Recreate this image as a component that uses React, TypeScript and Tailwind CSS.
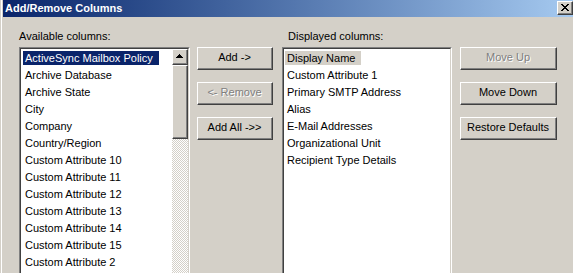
import type { ReactNode } from "react";

const available = [
  "ActiveSync Mailbox Policy",
  "Archive Database",
  "Archive State",
  "City",
  "Company",
  "Country/Region",
  "Custom Attribute 10",
  "Custom Attribute 11",
  "Custom Attribute 12",
  "Custom Attribute 13",
  "Custom Attribute 14",
  "Custom Attribute 15",
  "Custom Attribute 2",
];

const displayed = [
  "Display Name",
  "Custom Attribute 1",
  "Primary SMTP Address",
  "Alias",
  "E-Mail Addresses",
  "Organizational Unit",
  "Recipient Type Details",
];

function Raised({ className = "", children }: { className?: string; children?: ReactNode }) {
  return (
    <div className={`border-t border-l border-t-white border-l-white border-b border-r border-b-[#404040] border-r-[#404040] ${className}`}>
      <div className="flex h-full w-full items-center justify-center border-b border-r border-b-[#808080] border-r-[#808080] bg-[#d4d0c8]">
        {children}
      </div>
    </div>
  );
}

function WinButton({ label, disabled = false }: { label: string; disabled?: boolean }) {
  return (
    <Raised className="h-[23px] w-full">
      <span className={disabled ? "text-[#808080] [text-shadow:1px_1px_0_#fff]" : "text-black"}>{label}</span>
    </Raised>
  );
}

function Sunken({ className = "", children }: { className?: string; children?: ReactNode }) {
  return (
    <div className={`border-t border-l border-t-[#808080] border-l-[#808080] border-b border-r border-b-white border-r-white ${className}`}>
      <div className="flex h-full w-full border-t border-l border-t-[#404040] border-l-[#404040] border-b border-r border-b-[#d4d0c8] border-r-[#d4d0c8] bg-white">
        {children}
      </div>
    </div>
  );
}

function Item({ text, mode }: { text: string; mode?: "focus" | "blur" }) {
  const hl =
    mode === "focus" ? "bg-[#0a246a] text-white" : mode === "blur" ? "bg-[#d4d0c8] text-black" : "text-black";
  return (
    <div className="flex h-[17px] items-center">
      <span className={`inline-block h-[14px] pl-[2px] pr-[6px] leading-[14px] whitespace-nowrap ${hl}`}>{text}</span>
    </div>
  );
}

export default function App() {
  return (
    <div className="flex h-[273px] w-[573px] overflow-hidden bg-[#d4d0c8] font-['Liberation_Sans',Arial,sans-serif] text-[11px] text-black">
      <div className="w-[1px]" />
      <div className="w-[1px] bg-white" />
      <div className="w-[1px]" />
      <div className="flex min-w-0 flex-1 flex-col">
        {/* title bar */}
        <div className="flex h-[18px] items-center bg-linear-to-r from-[#0a246a] to-[#a6caf0] pl-[2px]">
          <span className="flex-1 text-[11px] font-bold text-white">Add/Remove Columns</span>
          <Raised className="h-[14px] w-[16px]">
            <svg width="8" height="7" viewBox="0 0 8 7" shapeRendering="crispEdges">
              <path
                fill="#000"
                d="M0 0h2v1H0zM6 0h2v1H6zM1 1h2v1H1zM5 1h2v1H5zM2 2h4v1H2zM3 3h2v1H3zM2 4h4v1H2zM1 5h2v1H1zM5 5h2v1H5zM0 6h2v1H0zM6 6h2v1H6z"
              />
            </svg>
          </Raised>
        </div>

        <div className="flex flex-1 pl-[16px] pt-[13px]">
          {/* available */}
          <div className="flex w-[171px] flex-col">
            <div className="mb-[4px] h-[13px] leading-[13px]">Available columns:</div>
            <Sunken className="h-[230px]">
              <div className="flex-1 overflow-hidden pl-[2px] pt-[1px]">
                {available.map((a, i) => (
                  <Item key={a} text={a} mode={i === 0 ? "focus" : undefined} />
                ))}
              </div>
              <div className="flex w-[16px] flex-col">
                <Raised className="h-[16px] w-[16px]">
                  <svg width="7" height="4" viewBox="0 0 7 4" shapeRendering="crispEdges">
                    <path fill="#000" d="M3 0h1v1H3zM2 1h3v1H2zM1 2h5v1H1zM0 3h7v1H0z" />
                  </svg>
                </Raised>
                <Raised className="h-[74px] w-[16px]" />
                <div className="flex-1 bg-[repeating-conic-gradient(#d4d0c8_0%_25%,#ffffff_0%_50%)] bg-[length:2px_2px]" />
              </div>
            </Sunken>
          </div>

          {/* add/remove buttons */}
          <div className="ml-[7px] mt-[17px] flex w-[76px] flex-col gap-[12px]">
            <WinButton label="Add ->" />
            <WinButton label="<- Remove" disabled />
            <WinButton label="Add All ->>" />
          </div>

          {/* displayed */}
          <div className="ml-[9px] flex w-[170px] flex-col">
            <div className="mb-[4px] h-[13px] pl-[6px] leading-[13px]">Displayed columns:</div>
            <Sunken className="h-[230px]">
              <div className="flex-1 overflow-hidden pl-[1px] pt-[1px]">
                {displayed.map((d, i) => (
                  <Item key={d} text={d} mode={i === 0 ? "blur" : undefined} />
                ))}
              </div>
            </Sunken>
          </div>

          {/* order buttons */}
          <div className="ml-[8px] mt-[17px] flex w-[97px] flex-col gap-[12px]">
            <WinButton label="Move Up" disabled />
            <WinButton label="Move Down" />
            <WinButton label="Restore Defaults" />
          </div>
        </div>
      </div>
    </div>
  );
}
